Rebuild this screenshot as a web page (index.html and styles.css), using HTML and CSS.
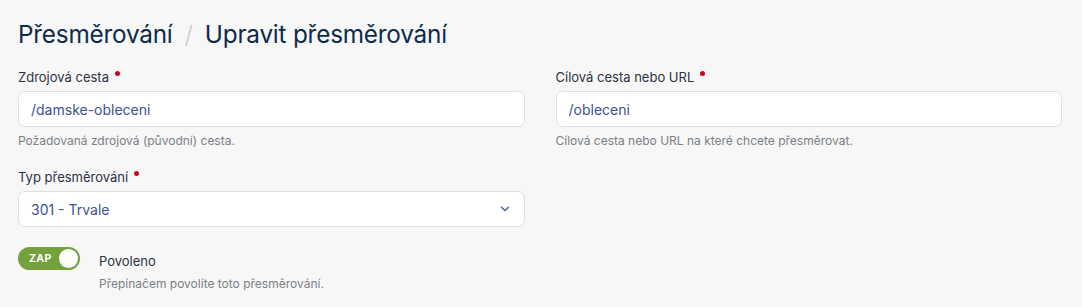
FILE: index.html
```html
<!DOCTYPE html>
<html lang="cs">
<head>
  <meta charset="UTF-8">
  <title>Upravit přesměrování</title>
  <link rel="stylesheet" href="styles.css">
</head>
<body>
  <div class="page">
    <h1 class="title">
      <span>Přesměrování</span>
      <span class="sep">/</span>
      <span>Upravit přesměrování</span>
    </h1>

    <div class="grid">
      <div class="field">
        <label class="label">Zdrojová cesta <span class="req"></span></label>
        <input class="input" type="text" value="/damske-obleceni">
        <div class="help">Požadovaná zdrojová (původní) cesta.</div>
      </div>
      <div class="field">
        <label class="label">Cílová cesta nebo URL <span class="req"></span></label>
        <input class="input" type="text" value="/obleceni">
        <div class="help">Cílová cesta nebo URL na které chcete přesměrovat.</div>
      </div>
      <div class="field">
        <label class="label">Typ přesměrování <span class="req"></span></label>
        <div class="select">
          <span>301 - Trvale</span>
          <svg width="10" height="6" viewBox="0 0 10 6"><path d="M1.5 1.2 L5 4.6 L8.5 1.2" fill="none" stroke="#3e5a8f" stroke-width="1.3" stroke-linecap="round"/></svg>
        </div>
      </div>
    </div>

    <div class="switch-row">
      <div class="toggle">
        <span class="toggle-text">ZAP</span>
        <span class="knob"></span>
      </div>
      <div class="switch-info">
        <div class="switch-label">Povoleno</div>
        <div class="help">Přepínačem povolíte toto přesměrování.</div>
      </div>
    </div>
  </div>
</body>
</html>
```

FILE: styles.css
```css
body {
  margin: 0;
  font-family: Inter, "Noto Sans", sans-serif;
  background: #f7f7f7;
  color: #1f2d3d;
}

.page {
  padding: 17px 20px 0 18px;
}

.title {
  margin: 0;
  font-size: 24.3px;
  font-weight: 400;
  color: #0c2b4b;
  display: flex;
  gap: 10px;
  letter-spacing: -0.2px;
  line-height: 34px;
}

.title .sep {
  color: #c9ccd1;
  font-weight: 300;
  margin: 0 2px;
}

.grid {
  display: grid;
  grid-template-columns: 1fr 1fr;
  column-gap: 31px;
  row-gap: 21px;
  margin-top: 18px;
}

.label {
  display: block;
  font-size: 13px;
  color: #2b3340;
  line-height: 16px;
  margin-bottom: 6px;
}

.req {
  display: inline-block;
  width: 5px;
  height: 5px;
  border-radius: 50%;
  background: #d0021b;
  vertical-align: top;
  margin: 2px 0 0 2px;
}

.input,
.select {
  box-sizing: border-box;
  width: 100%;
  height: 36px;
  border: 1px solid #dcdfe4;
  border-radius: 7px;
  background: #fff;
  padding: 0 12px;
  font-family: inherit;
  font-size: 14px;
  color: #3b5290;
  outline: none;
  display: block;
}

.select {
  display: flex;
  align-items: center;
  justify-content: space-between;
  padding-right: 14px;
}

.help {
  font-size: 12px;
  color: #7b7f85;
  margin-top: 7px;
  line-height: 14px;
}

.switch-row {
  display: flex;
  align-items: flex-start;
  gap: 19px;
  margin-top: 20px;
}

.toggle {
  width: 62px;
  height: 23px;
  border-radius: 12px;
  background: #72a13d;
  display: flex;
  align-items: center;
  justify-content: space-between;
  padding: 0 2px 0 11px;
  box-sizing: border-box;
}

.toggle-text {
  color: #fff;
  font-size: 10.5px;
  font-weight: 700;
  letter-spacing: 0.3px;
}

.knob {
  width: 19px;
  height: 19px;
  border-radius: 50%;
  background: #fff;
}

.switch-info {
  padding-top: 6px;
}

.switch-label {
  font-size: 13px;
  color: #2b3340;
  line-height: 16px;
}

.switch-info .help {
  margin-top: 8px;
}
```
